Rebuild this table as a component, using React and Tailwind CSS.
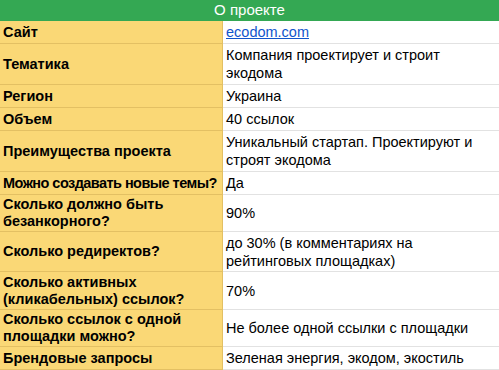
import React from "react";

const rows = [
  { label: "Сайт", value: "ecodom.com", link: true, h: "h-[23px]" },
  { label: "Тематика", value: "Компания проектирует и строит экодома", h: "h-[41px]" },
  { label: "Регион", value: "Украина", h: "h-[23px]" },
  { label: "Объем", value: "40 ссылок", h: "h-[23px]" },
  { label: "Преимущества проекта", value: "Уникальный стартап. Проектируют и строят экодома", h: "h-[41px]" },
  { label: "Можно создавать новые темы?", value: "Да", h: "h-[23px]", tight: true },
  { label: "Сколько должно быть безанкорного?", value: "90%", h: "h-[37px]" },
  { label: "Сколько редиректов?", value: "до 30% (в комментариях на рейтинговых площадках)", h: "h-[40px]" },
  { label: "Сколько активных (кликабельных) ссылок?", value: "70%", h: "h-[38px]" },
  { label: "Сколько ссылок с одной площадки можно?", value: "Не более одной ссылки с площадки", h: "h-[37px]" },
  { label: "Брендовые запросы", value: "Зеленая энергия, экодом, экостиль", h: "h-[23px]" },
];

function Row({ label, value, link, h, tight }) {
  return (
    <div className={`flex ${h}`}>
      <div
        className={`w-[223px] shrink-0 flex items-center bg-[#fad876] border-r border-b border-[#e3c063] pl-[3px] font-bold text-[14.5px] leading-[17px] text-black ${
          tight ? "whitespace-nowrap tracking-[-0.55px] overflow-hidden" : ""
        }`}
      >
        {label}
      </div>
      <div className="flex-1 flex items-center bg-white border-b border-[#e2e2e2] pl-[3px] pr-2 text-[14.5px] leading-[18px] text-black">
        {link ? (
          <span className="text-[#1155cc] underline">{value}</span>
        ) : (
          value
        )}
      </div>
    </div>
  );
}

export default function App() {
  return (
    <div className="w-[499px] h-[370px] overflow-hidden bg-white font-['Liberation_Sans',Arial,sans-serif]">
      <div className="h-[21px] bg-[#34a853] text-white text-[15px] flex items-center justify-center">
        О проекте
      </div>
      {rows.map((r) => (
        <Row key={r.label} {...r} />
      ))}
    </div>
  );
}
